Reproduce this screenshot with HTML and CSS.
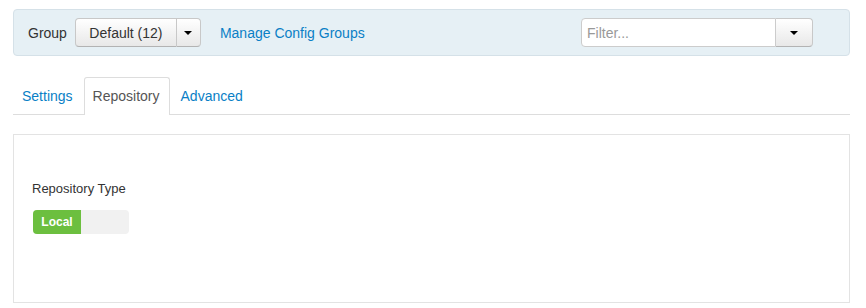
FILE: index.html
```html
<!DOCTYPE html>
<html lang="en">
<head>
    <meta charset="UTF-8">
    <title>Config</title>
    <link rel="stylesheet" href="styles.css">
</head>
<body>
    <div class="toolbar">
        <div class="toolbar-left">
            <span class="group-label">Group</span>
            <div class="btn-group">
                <button class="btn btn-main">Default (12)</button>
                <button class="btn btn-caret"><span class="caret"></span></button>
            </div>
            <a class="manage-link" href="#">Manage Config Groups</a>
        </div>
        <div class="filter">
            <input class="filter-input" type="text" placeholder="Filter...">
            <button class="btn btn-caret filter-caret"><span class="caret"></span></button>
        </div>
    </div>

    <ul class="nav-tabs">
        <li><a href="#">Settings</a></li>
        <li class="active"><a href="#">Repository</a></li>
        <li><a href="#">Advanced</a></li>
    </ul>

    <div class="panel">
        <div class="field-label">Repository Type</div>
        <div class="switch">
            <span class="switch-on">Local</span>
            <span class="switch-off"></span>
        </div>
    </div>
</body>
</html>
```

FILE: styles.css
```css
body {
    margin: 0;
    padding: 9px 16px 0 13px;
    font-family: "Liberation Sans", Arial, sans-serif;
    font-size: 14px;
    color: #333;
    background: #fff;
}
.toolbar {
    display: flex;
    justify-content: space-between;
    align-items: center;
    height: 45px;
    padding: 0 36px 0 14px;
    background: #e6f0f5;
    border: 1px solid #d5e1e8;
    border-radius: 4px;
}
.toolbar-left {
    display: flex;
    align-items: center;
}
.group-label {
    margin-right: 8px;
}
.btn-group {
    display: flex;
}
.btn {
    height: 29px;
    font-family: inherit;
    font-size: 14px;
    color: #333;
    background: linear-gradient(#ffffff, #e8e8e8);
    border: 1px solid #c8c8c8;
    border-bottom-color: #b3b3b3;
    cursor: pointer;
}
.btn-main {
    width: 102px;
    border-radius: 4px 0 0 4px;
    padding: 0;
}
.btn-caret {
    width: 24px;
    padding: 0;
    border-left: none;
    border-radius: 0 4px 4px 0;
    display: flex;
    align-items: center;
    justify-content: center;
}
.caret {
    width: 0;
    height: 0;
    border-left: 4px solid transparent;
    border-right: 4px solid transparent;
    border-top: 4px solid #000;
}
.manage-link {
    margin-left: 19px;
    color: #0a7fc6;
    text-decoration: none;
}
.filter {
    display: flex;
}
.filter-input {
    box-sizing: border-box;
    width: 195px;
    height: 29px;
    padding: 0 5px;
    font-family: inherit;
    font-size: 14px;
    border: 1px solid #cccccc;
    border-radius: 4px 0 0 4px;
    outline: none;
}
.filter-input::placeholder {
    color: #999;
}
.filter-caret {
    width: 37px;
}
.nav-tabs {
    display: flex;
    list-style: none;
    margin: 21px 0 0;
    padding: 0;
    border-bottom: 1px solid #ddd;
}
.nav-tabs li {
    margin-right: 2px;
    margin-bottom: -1px;
}
.nav-tabs a {
    display: block;
    height: 36px;
    line-height: 37px;
    padding: 0 8px;
    color: #0a7fc6;
    text-decoration: none;
    border: 1px solid transparent;
    border-bottom: none;
    border-radius: 3px 3px 0 0;
}
.nav-tabs li.active a {
    color: #555;
    background: #fff;
    border-color: #ddd;
    height: 37px;
    padding-right: 9px;
}
.panel {
    margin-top: 19px;
    box-sizing: border-box;
    height: 169px;
    padding: 45px 18px 0;
    border: 1px solid #e3e3e3;
}
.field-label {
    font-size: 13px;
    line-height: 17px;
    color: #333;
}
.switch {
    display: flex;
    width: 96px;
    height: 24px;
    margin-top: 13px;
    margin-left: 1px;
    border-radius: 4px;
    overflow: hidden;
    background: #f1f1f1;
}
.switch-on {
    width: 48px;
    line-height: 24px;
    text-align: center;
    font-size: 12px;
    font-weight: bold;
    color: #fff;
    background: #6cbf3f;
}
.switch-off {
    flex: 1;
}
```
